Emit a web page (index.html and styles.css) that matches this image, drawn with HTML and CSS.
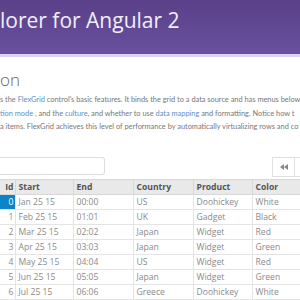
FILE: index.html
```html
<!DOCTYPE html>
<html lang="en">
<head>
    <meta charset="UTF-8">
    <title>FlexGrid Explorer for Angular 2</title>
    <link rel="stylesheet" href="styles.css">
</head>
<body>
    <div class="header">
        <h1 class="titulo">lorer for Angular 2</h1>
    </div>

    <div class="intro">
        <h2 class="sub">on</h2>
        <p class="texto">s the <a href="#">FlexGrid</a> control's basic features. It binds the grid to a data source and has menus below<br>
        <a href="#">tion mode</a> , and the <a href="#">culture</a>, and whether to use <a href="#">data mapping</a> and formatting. Notice how t<br>
        a items. FlexGrid achieves this level of performance by automatically virtualizing rows and co</p>
    </div>

    <div class="barra">
        <div class="buscar"></div>
        <div class="pager">
            <button class="pbtn"><svg width="8" height="6" viewBox="0 0 8 6"><path d="M4 0 L0 3 L4 6 Z M8 0 L4 3 L8 6 Z" fill="#888"/></svg></button>
            <button class="pbtn"></button>
        </div>
    </div>

    <table class="grid">
        <tr class="cab">
            <th class="id">Id</th><th>Start</th><th>End</th><th>Country</th><th>Product</th><th>Color</th>
        </tr>
        <tr><td class="id sel">0</td><td>Jan 25 15</td><td>00:00</td><td>US</td><td>Doohickey</td><td>White</td></tr>
        <tr><td class="id">1</td><td>Feb 25 15</td><td>01:01</td><td>UK</td><td>Gadget</td><td>Black</td></tr>
        <tr><td class="id">2</td><td>Mar 25 15</td><td>02:02</td><td>Japan</td><td>Widget</td><td>Red</td></tr>
        <tr><td class="id">3</td><td>Apr 25 15</td><td>03:03</td><td>Japan</td><td>Widget</td><td>Green</td></tr>
        <tr><td class="id">4</td><td>May 25 15</td><td>04:04</td><td>US</td><td>Widget</td><td>Red</td></tr>
        <tr><td class="id">5</td><td>Jun 25 15</td><td>05:05</td><td>Japan</td><td>Widget</td><td>Green</td></tr>
        <tr><td class="id">6</td><td>Jul 25 15</td><td>06:06</td><td>Greece</td><td>Doohickey</td><td>White</td></tr>
    </table>
</body>
</html>
```

FILE: styles.css
```css
body {
    margin: 0;
    font-family: "Open Sans", "Noto Sans", sans-serif;
    background-color: white;
    overflow: hidden;
    width: 300px;
    height: 300px;
}

.header {
    height: 54px;
    background: linear-gradient(#5a4088, #6951a0);
    border-bottom: 3px solid #ddd3ee;
}

.titulo {
    margin: 0;
    padding-top: 6px;
    color: #f2eefa;
    font-size: 21px;
    font-weight: 400;
    white-space: nowrap;
}

.intro {
    padding-top: 13px;
}

.sub {
    margin: 0;
    color: #666;
    font-size: 17px;
    font-weight: 300;
    line-height: 20px;
}

.texto {
    margin: 0;
    padding-top: 3px;
    color: #777;
    font-family: Lato, "Open Sans", sans-serif;
    font-size: 7.4px;
    line-height: 13.5px;
    white-space: nowrap;
}

.texto a {
    color: #5b8fc6;
    text-decoration: none;
}

.barra {
    display: flex;
    justify-content: space-between;
    margin-top: 23px;
    height: 20px;
}

.buscar {
    width: 104px;
    height: 16px;
    border: 1px solid #ddd;
    border-left: none;
    border-radius: 0 3px 3px 0;
}

.pager {
    display: flex;
    margin-right: -18px;
}

.pbtn {
    width: 23px;
    height: 20px;
    padding: 0;
    border: 1px solid #e0e0e0;
    background: white;
    display: flex;
    align-items: center;
    justify-content: center;
}

.pbtn + .pbtn {
    border-left: none;
}

.grid {
    margin-top: 2px;
    border-collapse: collapse;
    table-layout: fixed;
    width: 330px;
    font-size: 8.6px;
}

.grid th, .grid td {
    box-sizing: border-box;
    height: 15px;
    padding: 0 3px;
    border: 1px solid #e4e4e4;
    text-align: left;
    color: #8a8a8a;
    font-weight: 400;
    white-space: nowrap;
    overflow: hidden;
}

.grid th {
    background-color: #e9e9e9;
    color: #555;
    font-weight: 700;
    border-color: #d8d8d8;
}

.grid th:nth-child(1) { width: 15px; }
.grid th:nth-child(2) { width: 58px; }
.grid th:nth-child(3) { width: 60px; }
.grid th:nth-child(4) { width: 60px; }
.grid th:nth-child(5) { width: 59px; }
.grid th:nth-child(6) { width: 78px; }

.grid .id {
    text-align: right;
    padding: 0 1px 0 0;
    border-left: none;
}

.grid .sel {
    background-color: #0a85c9;
    color: white;
}
```
